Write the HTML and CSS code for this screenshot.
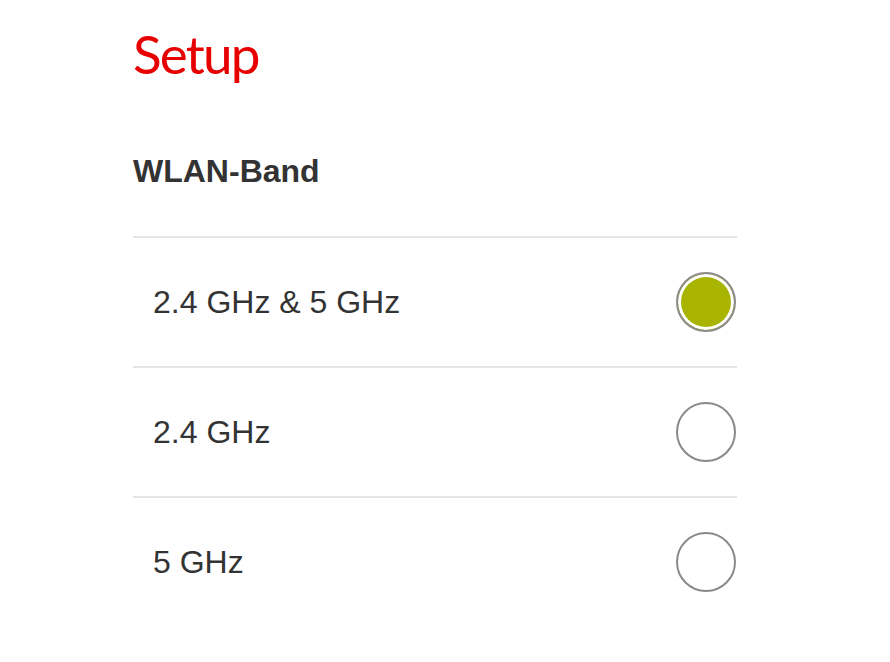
FILE: index.html
```html
<!DOCTYPE html>
<html lang="de">
<head>
  <meta charset="UTF-8">
  <title>Setup</title>
  <link rel="stylesheet" href="styles.css">
</head>
<body>

<div class="page">
  <h1 class="title">Setup</h1>

  <h2 class="section-title">WLAN-Band</h2>

  <div class="options">
    <label class="option">
      <span>2.4 GHz &amp; 5 GHz</span>
      <input type="radio" name="band" value="both" checked>
    </label>
    <label class="option">
      <span>2.4 GHz</span>
      <input type="radio" name="band" value="24">
    </label>
    <label class="option">
      <span>5 GHz</span>
      <input type="radio" name="band" value="5">
    </label>
  </div>
</div>

</body>
</html>
```

FILE: styles.css
```css
body {
  margin: 0;
  background: #fff;
  font-family: 'Liberation Sans', Arial, sans-serif;
  color: #333;
}

.page {
  width: 604px;
  margin-left: 133px;
  padding-top: 22px;
}

.title {
  margin: 0;
  font-family: Lato, 'Open Sans', sans-serif;
  font-weight: normal;
  font-size: 53px;
  line-height: 64px;
  letter-spacing: -1.8px;
  color: #e60000;
}

.section-title {
  margin: 0;
  padding-top: 65px;
  font-size: 32px;
  line-height: 40px;
  font-weight: bold;
  color: #333;
}

.options {
  margin-top: 45px;
  border-top: 2px solid #e6e6e6;
}

.option {
  display: flex;
  align-items: center;
  justify-content: space-between;
  height: 128px;
  padding-left: 20px;
  border-bottom: 2px solid #e6e6e6;
  font-size: 32px;
  cursor: pointer;
}

.option:last-child {
  border-bottom: none;
}

.option input {
  appearance: none;
  -webkit-appearance: none;
  margin: 0 1px 0 0;
  width: 60px;
  height: 60px;
  border: 2px solid #8a8a8a;
  border-radius: 50%;
  background: #fff;
  cursor: pointer;
}

.option input:checked {
  background: #a8b400;
  box-shadow: inset 0 0 0 3px #fff;
}
```
